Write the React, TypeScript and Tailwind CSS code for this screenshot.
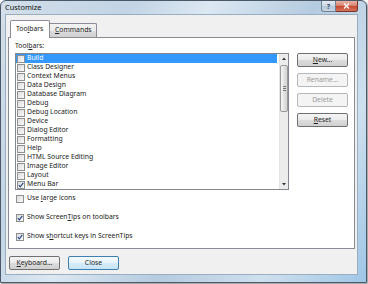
import React from "react";

const font = { fontFamily: '"Noto Sans", "Open Sans", sans-serif' };

function Check({ checked }: { checked?: boolean }) {
  return (
    <div className="w-[8px] h-[8px] shrink-0 border border-[#8f8f8f] bg-white flex items-center justify-center">
      <div className="w-[6px] h-[6px] bg-[linear-gradient(135deg,#dcdcdc,#fafafa)] flex items-center justify-center">
        {checked && (
          <svg width="6" height="6" viewBox="0 0 6 6">
            <path d="M0.8 3.2 L2.3 4.8 L5.3 0.8" stroke="#2a4a8c" strokeWidth="1.2" fill="none" />
          </svg>
        )}
      </div>
    </div>
  );
}

function Btn({ children, disabled, def }: { children: React.ReactNode; disabled?: boolean; def?: boolean }) {
  const cls = disabled
    ? "border-[#b5b9bc] bg-[#f4f4f4] text-[#9a9a9a]"
    : def
    ? "border-[#3c7fb1] bg-[linear-gradient(to_bottom,#f3f9fd_0%,#e6f3fb_50%,#d6ecf9_50%,#c6e4f6_100%)] text-[#222]"
    : "border-[#707070] bg-[linear-gradient(to_bottom,#f4f4f4_0%,#ebebeb_50%,#dddddd_50%,#d0d0d0_100%)] text-[#222]";
  return (
    <div className={`w-[51px] h-[14px] rounded-[2px] border flex items-center justify-center text-[6.8px] leading-none ${cls}`}>
      {children}
    </div>
  );
}

const items = [
  "Build",
  "Class Designer",
  "Context Menus",
  "Data Design",
  "Database Diagram",
  "Debug",
  "Debug Location",
  "Device",
  "Dialog Editor",
  "Formatting",
  "Help",
  "HTML Source Editing",
  "Image Editor",
  "Layout",
  "Menu Bar",
];

export default function App() {
  return (
    <div className="w-[368px] h-[284px] bg-white overflow-hidden" style={font}>
      <div className="w-[367px] h-[283px] rounded-t-[6px] border border-[#4a5868] flex flex-col shadow-[1px_1px_2px_rgba(0,0,0,0.45)] bg-[linear-gradient(120deg,#d3dfea_0%,#c2d4e5_25%,#dce8f2_40%,#b5cbe0_60%,#cfe0ee_80%,#9fc6e6_100%)]">
        {/* title bar */}
        <div className="h-[13px] flex items-start shrink-0">
          <div className="pl-[4px] h-[13px] leading-[13px] text-[7.4px] text-[#111] flex-1">Customize</div>
          <div className="flex mr-[8px]">
            <div className="w-[15px] h-[11px] rounded-bl-[3px] border border-t-0 border-[#6f8193] bg-[linear-gradient(to_bottom,#e4ebf2_0%,#cbd8e4_50%,#b4c6d7_50%,#c7d6e4_100%)] flex items-center justify-center text-[7px] text-[#33475b] font-bold leading-none">
              ?
            </div>
            <div className="w-[22px] h-[11px] rounded-br-[3px] border border-l-0 border-t-0 border-[#7a3328] bg-[linear-gradient(to_bottom,#eab3a8_0%,#d8836f_45%,#c4452d_50%,#d9735c_100%)] flex items-center justify-center">
              <svg width="7" height="6" viewBox="0 0 7 6">
                <path d="M1 0.5 L6 5.5 M6 0.5 L1 5.5" stroke="#fff" strokeWidth="1.4" />
              </svg>
            </div>
          </div>
        </div>
        {/* client */}
        <div className="ml-[4px] w-[353px] h-[261px] bg-[#f0f0f0] border border-[#9aaec2] flex flex-col pl-[2px] pt-[5px] text-[#222]">
          {/* tabs */}
          <div className="flex items-end h-[17px] pl-[2px]">
            <div className="relative z-10 -mb-[1px] w-[40px] h-[18px] bg-white border border-b-0 border-[#898c95] rounded-t-[2px] flex items-center pl-[5px] text-[6.8px] leading-none">
              Too<u>l</u>bars
            </div>
            <div className="w-[47px] h-[14px] border border-l-0 border-b-0 border-[#898c95] rounded-tr-[2px] bg-[linear-gradient(to_bottom,#f2f2f2_0%,#ebebeb_50%,#dddddd_50%,#cfcfcf_100%)] flex items-center pl-[5px] text-[6.8px] leading-none">
              <u>C</u>ommands
            </div>
          </div>
          {/* panel */}
          <div className="w-[347px] h-[212px] bg-white border border-[#898c95] flex flex-col pl-[6px] pt-[3px]">
            <div className="h-[9px] leading-[9px] text-[6.8px]">
              Tool<u>b</u>ars:
            </div>
            <div className="flex mt-[3px]">
              <div className="w-[274px] h-[137px] border border-[#828790] flex">
                <div className="flex-1 flex flex-col">
                  {items.map((it, i) => (
                    <div
                      key={it}
                      className={`h-[9px] flex items-center gap-[2px] pl-[1px] mr-[2px] text-[6.8px] leading-none ${
                        i === 0 ? "bg-[#3399ff] text-white" : ""
                      }`}
                    >
                      <Check checked={it === "Menu Bar"} />
                      <span>{it}</span>
                    </div>
                  ))}
                </div>
                {/* scrollbar */}
                <div className="w-[9px] h-full bg-[#ececec] border-l border-[#e3e3e3] flex flex-col items-center">
                  <div className="h-[9px] w-full flex items-center justify-center">
                    <svg width="4" height="3" viewBox="0 0 4 3">
                      <path d="M0 3 L2 0.5 L4 3 Z" fill="#333" />
                    </svg>
                  </div>
                  <div className="mt-[2px] w-[8px] h-[47px] rounded-[2px] border border-[#9a9a9a] bg-[linear-gradient(to_right,#f6f6f6,#e2e2e2_50%,#d4d4d4)] flex flex-col items-center justify-center gap-[1px]">
                    <div className="w-[3px] h-[1px] bg-[#777]" />
                    <div className="w-[3px] h-[1px] bg-[#777]" />
                    <div className="w-[3px] h-[1px] bg-[#777]" />
                  </div>
                  <div className="flex-1" />
                  <div className="h-[9px] w-full flex items-center justify-center">
                    <svg width="4" height="3" viewBox="0 0 4 3">
                      <path d="M0 0 L2 2.5 L4 0 Z" fill="#333" />
                    </svg>
                  </div>
                </div>
              </div>
              <div className="ml-[8px] flex flex-col gap-[6px]">
                <Btn>
                  <u>N</u>ew...
                </Btn>
                <Btn disabled>Rename...</Btn>
                <Btn disabled>Delete</Btn>
                <Btn>
                  <u>R</u>eset
                </Btn>
              </div>
            </div>
            <div className="flex flex-col gap-[10px] mt-[4px] pl-[1px]">
              <div className="h-[9px] flex items-center gap-[3px] text-[6.8px] leading-none">
                <Check />
                <span>
                  Use <u>l</u>arge icons
                </span>
              </div>
              <div className="h-[9px] flex items-center gap-[3px] text-[6.8px] leading-none">
                <Check checked />
                <span>
                  Show Screen<u>T</u>ips on toolbars
                </span>
              </div>
              <div className="h-[9px] flex items-center gap-[3px] text-[6.8px] leading-none">
                <Check checked />
                <span>
                  Show s<u>h</u>ortcut keys in ScreenTips
                </span>
              </div>
            </div>
          </div>
          {/* bottom buttons */}
          <div className="flex gap-[8px] mt-[7px] pl-[1px]">
            <Btn>
              <u>K</u>eyboard...
            </Btn>
            <Btn def>Close</Btn>
          </div>
        </div>
      </div>
    </div>
  );
}
